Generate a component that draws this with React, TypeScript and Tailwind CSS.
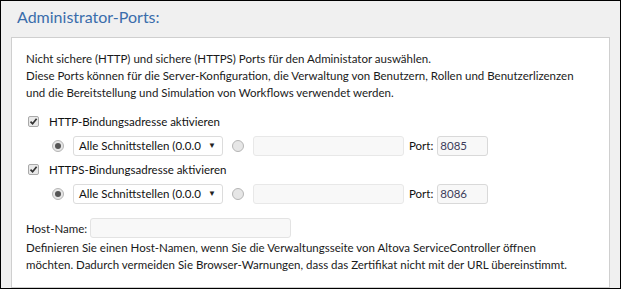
import React from "react";

function CheckBox() {
  return (
    <span className="flex h-[11px] w-[11px] items-center justify-center rounded-[2px] border border-[#a9a9a9] bg-[#e9e9e9]">
      <svg width="9" height="9" viewBox="0 0 9 9">
        <path d="M1.5 4.6 L3.6 6.8 L7.6 1.8" fill="none" stroke="#333" strokeWidth="1.7" />
      </svg>
    </span>
  );
}

function Radio({ checked }: { checked?: boolean }) {
  return (
    <span className="flex h-[12px] w-[12px] items-center justify-center rounded-full border border-[#b5b5b5] bg-[#e6e6e6]">
      {checked && <span className="h-[6px] w-[6px] rounded-full bg-[#555]" />}
    </span>
  );
}

function BindingRow({ label, port }: { label: string; port: string }) {
  return (
    <div className="flex flex-col">
      <div className="flex h-[25px] items-center gap-[10px] pl-[2px]">
        <CheckBox />
        <span className="text-[#111]">{label}</span>
      </div>
      <div className="flex h-[23px] items-center pl-[26px]">
        <Radio checked />
        <div className="ml-[9px] flex h-[20px] w-[150px] items-center justify-between rounded-[3px] border border-[#dcdcdc] bg-white pl-[5px] pr-[6px]">
          <span className="text-[#111]">Alle Schnittstellen (0.0.0</span>
          <span className="text-[8px] text-[#222]">▼</span>
        </div>
        <span className="ml-[9px]">
          <Radio />
        </span>
        <div className="ml-[9px] h-[20px] w-[151px] rounded-[3px] border border-[#e8e8e8] bg-[#f8f8f8]" />
        <span className="ml-[5px] text-[#111]">Port:</span>
        <div className="ml-[4px] flex h-[20px] w-[51px] items-center rounded-[3px] border border-[#d9d9d9] bg-[#f8f8f8] pl-[2px] text-[#3c3c5a]">
          {port}
        </div>
      </div>
    </div>
  );
}

export default function App() {
  return (
    <div className="bg-white">
      <div
        className="flex h-[289px] w-[621px] flex-col whitespace-nowrap border border-black bg-[#f0f0f0] px-[10px] text-[11.5px] leading-[17px]"
        style={{ fontFamily: "Lato, 'Noto Sans', sans-serif" }}
      >
        <div className="h-[36px] shrink-0 pl-[6px] pt-[5px] text-[16px] leading-[22px] text-[#3a6dab]">
          Administrator-Ports:
        </div>
        <div className="flex flex-1 flex-col border border-[#cfcfcf] bg-white pb-[8px] pl-[14px] pr-[12px] pt-[12px] text-[#1a1a1a]">
          <p>
            Nicht sichere (HTTP) und sichere (HTTPS) Ports für den Administator auswählen.
            <br />
            Diese Ports können für die Server-Konfiguration, die Verwaltung von Benutzern, Rollen und Benutzerlizenzen
            <br />
            und die Bereitstellung und Simulation von Workflows verwendet werden.
          </p>
          <div className="mt-[8px] flex flex-col">
            <BindingRow label="HTTP-Bindungsadresse aktivieren" port="8085" />
            <BindingRow label="HTTPS-Bindungsadresse aktivieren" port="8086" />
          </div>
          <div className="mt-[13px] flex items-center">
            <span>Host-Name:</span>
            <div className="ml-[3px] h-[20px] w-[201px] rounded-[3px] border border-[#e3e3e3] bg-[#f8f8f8]" />
          </div>
          <p className="mt-[1px]">
            Definieren Sie einen Host-Namen, wenn Sie die Verwaltungsseite von Altova ServiceController öffnen
            <br />
            möchten. Dadurch vermeiden Sie Browser-Warnungen, dass das Zertifikat nicht mit der URL übereinstimmt.
          </p>
        </div>
      </div>
    </div>
  );
}
